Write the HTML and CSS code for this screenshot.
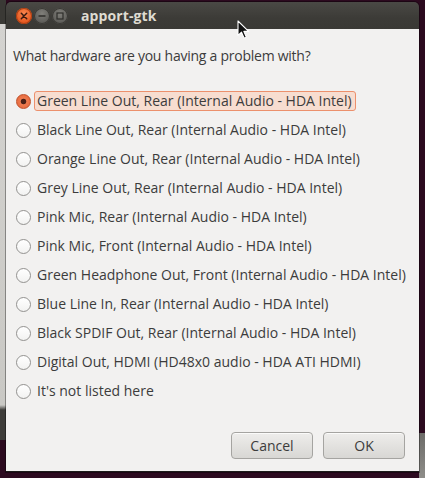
FILE: index.html
```html
<!DOCTYPE html>
<html>
<head>
<meta charset="utf-8">
<link rel="stylesheet" href="styles.css">
</head>
<body>
<div class="desktop">
  <div class="behind-left"></div>
  <div class="behind-right"></div>
  <div class="window">
    <div class="titlebar">
      <div class="wbtns">
        <span class="wbtn close"><svg width="16" height="16" viewBox="0 0 16 16"><path d="M5.3 5.3 L10.7 10.7 M10.7 5.3 L5.3 10.7" stroke="#3a1a10" stroke-width="1.5" stroke-linecap="round"/></svg></span>
        <span class="wbtn"><svg width="16" height="16" viewBox="0 0 16 16"><path d="M4.5 8 H11.5" stroke="#2e2d2a" stroke-width="1.4"/></svg></span>
        <span class="wbtn"><svg width="16" height="16" viewBox="0 0 16 16"><rect x="5" y="5" width="6" height="6" fill="none" stroke="#2e2d2a" stroke-width="1.2"/></svg></span>
      </div>
      <span class="title">apport-gtk</span>
    </div>
    <div class="content">
      <p class="question">What hardware are you having a problem with?</p>
      <ul class="options">
        <li class="opt selected"><span class="radio"></span><span class="label">Green Line Out, Rear (Internal Audio - HDA Intel)</span></li>
        <li class="opt"><span class="radio"></span><span class="label">Black Line Out, Rear (Internal Audio - HDA Intel)</span></li>
        <li class="opt"><span class="radio"></span><span class="label">Orange Line Out, Rear (Internal Audio - HDA Intel)</span></li>
        <li class="opt"><span class="radio"></span><span class="label">Grey Line Out, Rear (Internal Audio - HDA Intel)</span></li>
        <li class="opt"><span class="radio"></span><span class="label">Pink Mic, Rear (Internal Audio - HDA Intel)</span></li>
        <li class="opt"><span class="radio"></span><span class="label">Pink Mic, Front (Internal Audio - HDA Intel)</span></li>
        <li class="opt"><span class="radio"></span><span class="label">Green Headphone Out, Front (Internal Audio - HDA Intel)</span></li>
        <li class="opt"><span class="radio"></span><span class="label">Blue Line In, Rear (Internal Audio - HDA Intel)</span></li>
        <li class="opt"><span class="radio"></span><span class="label">Black SPDIF Out, Rear (Internal Audio - HDA Intel)</span></li>
        <li class="opt"><span class="radio"></span><span class="label">Digital Out, HDMI (HD48x0 audio - HDA ATI HDMI)</span></li>
        <li class="opt"><span class="radio"></span><span class="label">It's not listed here</span></li>
      </ul>
      <div class="actions">
        <button class="btn">Cancel</button>
        <button class="btn">OK</button>
      </div>
    </div>
  </div>
  <svg class="cursor" width="14" height="20" viewBox="0 0 14 20"><path d="M1 1 L1 15.5 L4.5 12.2 L7.2 18.2 L9.4 17.2 L6.8 11.4 L11.6 11.4 Z" fill="#111" stroke="#fff" stroke-width="1.1" stroke-linejoin="round"/></svg>
</div>
</body>
</html>
```
FILE: styles.css
```css
html, body {
  margin: 0;
  padding: 0;
  width: 425px;
  height: 478px;
  overflow: hidden;
  background: #2c0a1f;
  font-family: "Open Sans", "DejaVu Sans", sans-serif;
}
.desktop {
  position: relative;
  width: 425px;
  height: 478px;
}
.behind-left {
  position: absolute;
  left: 0;
  top: 0;
  width: 6px;
  height: 440px;
  background: linear-gradient(#3a3935 0, #3a3935 24px, #d4d3d0 24px, #c9c8c4 405px, #3d3c39 410px, #3d3c39 440px);
}
.behind-right {
  position: absolute;
  right: 0;
  bottom: 0;
  width: 6px;
  height: 45px;
  background: linear-gradient(#6c6b68, #8e8d89);
}
.window {
  position: absolute;
  left: 6px;
  top: 2px;
  width: 413px;
  height: 470px;
  display: flex;
  flex-direction: column;
  border-radius: 5px 5px 0 0;
  overflow: hidden;
  box-shadow: 0 0 0 1px rgba(0,0,0,0.35);
}
.titlebar {
  height: 27px;
  flex: none;
  background: linear-gradient(#4a4945, #3c3b37 60%, #3a3935);
  display: flex;
  align-items: center;
  padding-left: 10px;
}
.wbtns {
  display: flex;
  gap: 2px;
}
.wbtn {
  width: 16px;
  height: 16px;
  border-radius: 50%;
  background: radial-gradient(circle at 50% 35%, #807f7a, #5c5b57 70%);
  box-shadow: inset 0 0 0 1px #3a3935;
  display: block;
}
.wbtn svg { display: block; }
.wbtn.close {
  background: radial-gradient(circle at 50% 35%, #f9874f, #e4561e 70%);
  box-shadow: inset 0 0 0 1px #a93f14;
}
.title {
  margin-left: 13px;
  color: #dfdbd2;
  font-weight: bold;
  font-size: 14px;
  letter-spacing: 0.1px;
}
.content {
  flex: 1;
  background: #f2f1f0;
  border-bottom: 1px solid #1c1b19;
  display: flex;
  flex-direction: column;
  padding: 0 0 0 7px;
  color: #3c3c3c;
  font-size: 14px;
}
.question {
  margin: 18px 0 0 0;
  line-height: 18px;
  letter-spacing: -0.25px;
}
.options {
  list-style: none;
  margin: 27px 0 0 0;
  padding: 0;
  display: flex;
  flex-direction: column;
  gap: 11px;
}
.opt {
  display: flex;
  align-items: center;
  height: 18px;
}
.radio {
  width: 13px;
  height: 13px;
  border-radius: 50%;
  border: 1px solid #939290;
  background: linear-gradient(#ffffff, #f2f2f1);
  margin-left: 3px;
  flex: none;
  box-sizing: content-box;
}
.selected .radio {
  border-color: #c0502a;
  background: radial-gradient(circle, #4b2016 0, #4b2016 2.4px, #ee7a4e 3.2px, #e26236 100%);
}
.label {
  margin-left: 3px;
  padding: 0 3px 0 2px;
  line-height: 18px;
  border: 1px solid transparent;
  border-radius: 3px;
}
.selected .label {
  background: #f7ddd0;
  border-color: #ec906c;
}
.actions {
  margin-top: auto;
  margin-bottom: 12px;
  display: flex;
  justify-content: flex-end;
  gap: 10px;
  padding-right: 14px;
}
.btn {
  width: 82px;
  height: 27px;
  border: 1px solid #a5a4a1;
  border-radius: 4px;
  background: linear-gradient(#eeedeb, #d8d7d4);
  font-family: inherit;
  font-size: 14px;
  color: #3c3c3c;
  padding: 0;
  box-shadow: inset 0 1px 0 #fbfbfa;
}
.cursor {
  position: absolute;
  left: 237px;
  top: 20px;
}
```
